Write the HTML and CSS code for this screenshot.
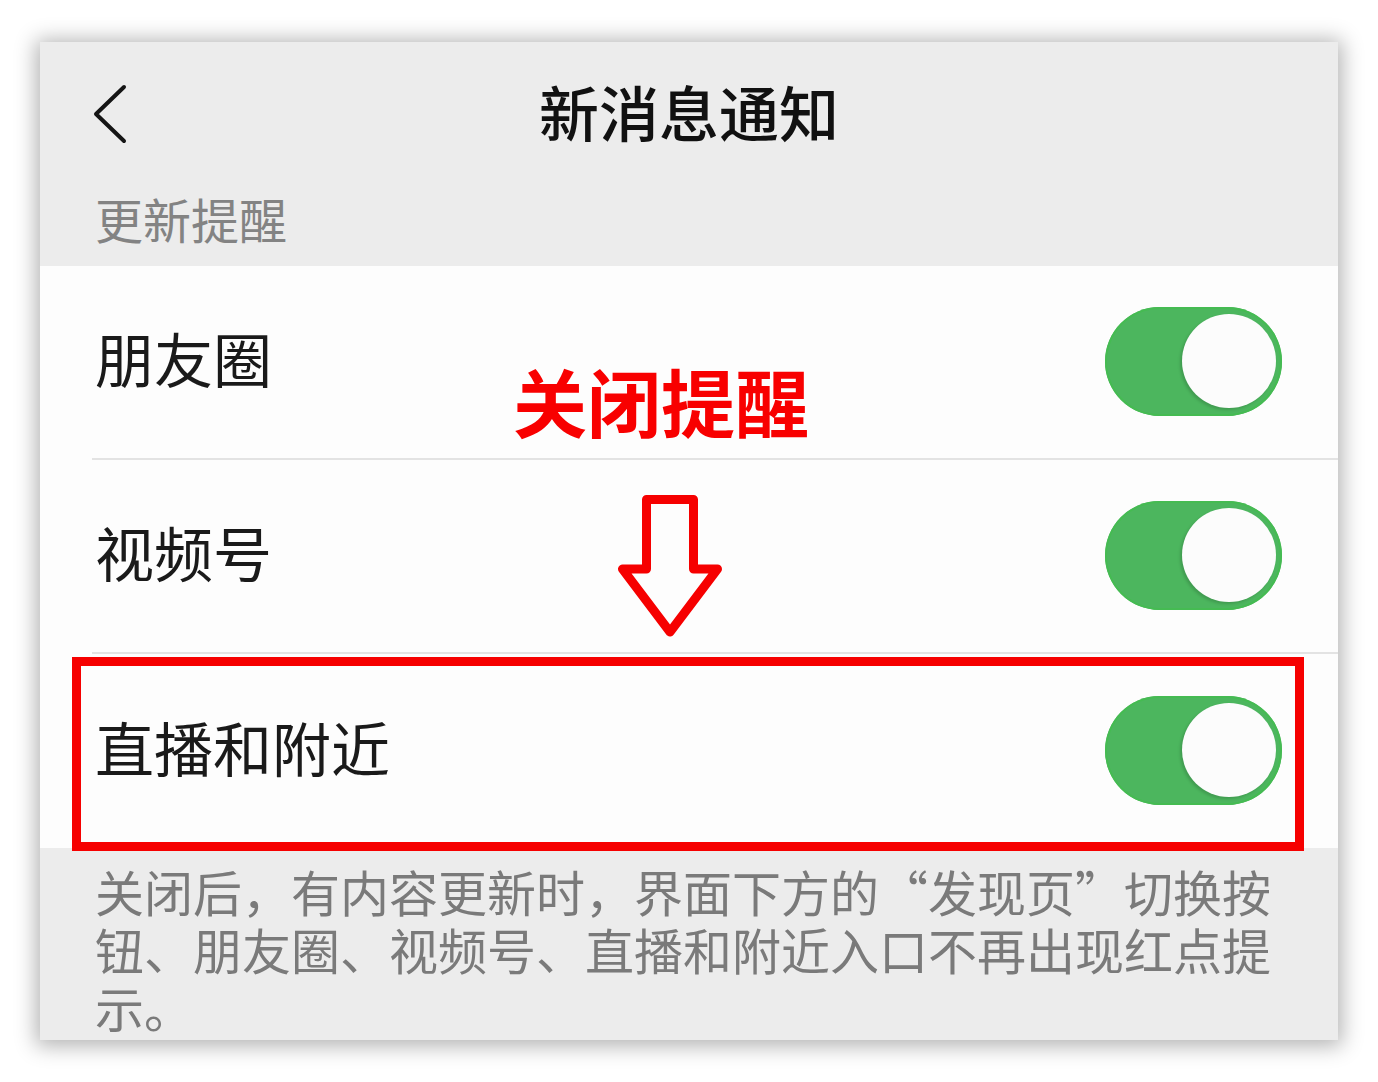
FILE: index.html
```html
<!DOCTYPE html>
<html lang="zh-CN">
<head>
    <meta charset="UTF-8">
    <meta name="viewport" content="width=device-width, initial-scale=1.0">
    <title>新消息通知</title>
    <link rel="stylesheet" href="styles.css">
</head>
<body>

    <div class="card">
        <div class="navBar">
            <svg class="backIcon" width="40" height="64" viewBox="0 0 40 64">
                <path d="M34 5 L6 32 L34 59" fill="none" stroke="#151515" stroke-width="4" stroke-linecap="round" stroke-linejoin="round"/>
            </svg>
            <div class="navTitle">新消息通知</div>
            <div></div>
        </div>

        <div class="sectionLabel">更新提醒</div>

        <div class="list">
            <div class="row">
                <div class="rowLabel">朋友圈</div>
                <div class="toggle"><div class="knob"></div></div>
            </div>
            <div class="row">
                <div class="rowLabel">视频号</div>
                <div class="toggle"><div class="knob"></div></div>
            </div>
            <div class="row last">
                <div class="rowLabel">直播和附近</div>
                <div class="toggle"><div class="knob"></div></div>
            </div>
        </div>

        <div class="footNote">关闭后，有内容更新时，界面下方的“发现页”切换按钮、朋友圈、视频号、直播和附近入口不再出现红点提示。</div>

        <!-- annotations drawn over the screenshot -->
        <div class="markText">关闭提醒</div>
        <svg class="markArrow" width="120" height="160" viewBox="0 0 120 160">
            <path d="M34.5 11.5 H81.5 V81 H105.5 L58 144 L10.5 81 H34.5 Z" fill="none" stroke="#f60000" stroke-width="9" stroke-linejoin="round"/>
        </svg>
        <div class="markBox"></div>
    </div>

</body>
</html>
```

FILE: styles.css
```css
html {
    background: #ffffff;
}

body {
    margin: 0;
    padding: 42px 0 42px 40px;
    min-height: 100vh;
    box-sizing: border-box;
    background: #ffffff;
    font-family: "Noto Sans CJK SC", "Noto Sans", sans-serif;
}

.card {
    position: relative;
    width: 1298px;
    height: 998px;
    background: #ececec;
    box-shadow: 0 2px 20px 4px rgba(0, 0, 0, 0.3);
}

.navBar {
    display: grid;
    grid-template-columns: 1fr auto 1fr;
    align-items: center;
    height: 143px;
    padding: 0 50px;
    box-sizing: border-box;
}

.backIcon {
    display: block;
}

.navTitle {
    font-size: 60px;
    font-weight: 500;
    color: #111111;
    line-height: 137px;
    padding-bottom: 6px;
}

.sectionLabel {
    height: 81px;
    box-sizing: border-box;
    padding-left: 55px;
    font-size: 48px;
    line-height: 67px;
    color: #838383;
}

.list {
    background: #fdfdfd;
}

.row {
    display: flex;
    align-items: center;
    justify-content: space-between;
    height: 194px;
    box-sizing: border-box;
    margin-left: 52px;
    padding: 0 56px 0 3px;
    border-bottom: 2px solid #e3e3e3;
}

.row.last {
    border-bottom: none;
}

.rowLabel {
    font-size: 59px;
    line-height: 1;
    color: #1a1a1a;
    margin-bottom: 10px;
}

.toggle {
    display: flex;
    align-items: center;
    justify-content: flex-end;
    width: 177px;
    height: 109px;
    box-sizing: border-box;
    padding: 0 6px;
    border-radius: 55px;
    background: #4cb65e;
    box-shadow: inset 0 0 0 2px #45bb52;
    margin-bottom: 2px;
}

.knob {
    width: 94px;
    height: 94px;
    border-radius: 50%;
    background: #fcfcfc;
    box-shadow: -2px 2px 3px rgba(0, 0, 0, 0.15);
}

.footNote {
    padding: 14px 56px 0 55px;
    font-size: 49px;
    line-height: 58px;
    color: #7a7a7a;
}

.markText {
    position: absolute;
    left: 473px;
    top: 321px;
    font-size: 74px;
    font-weight: 700;
    line-height: 1;
    color: #f80000;
}

.markArrow {
    position: absolute;
    left: 572px;
    top: 446px;
}

.markBox {
    position: absolute;
    left: 32px;
    top: 615px;
    width: 1232px;
    height: 194px;
    box-sizing: border-box;
    border: 9px solid #f60000;
}
```
